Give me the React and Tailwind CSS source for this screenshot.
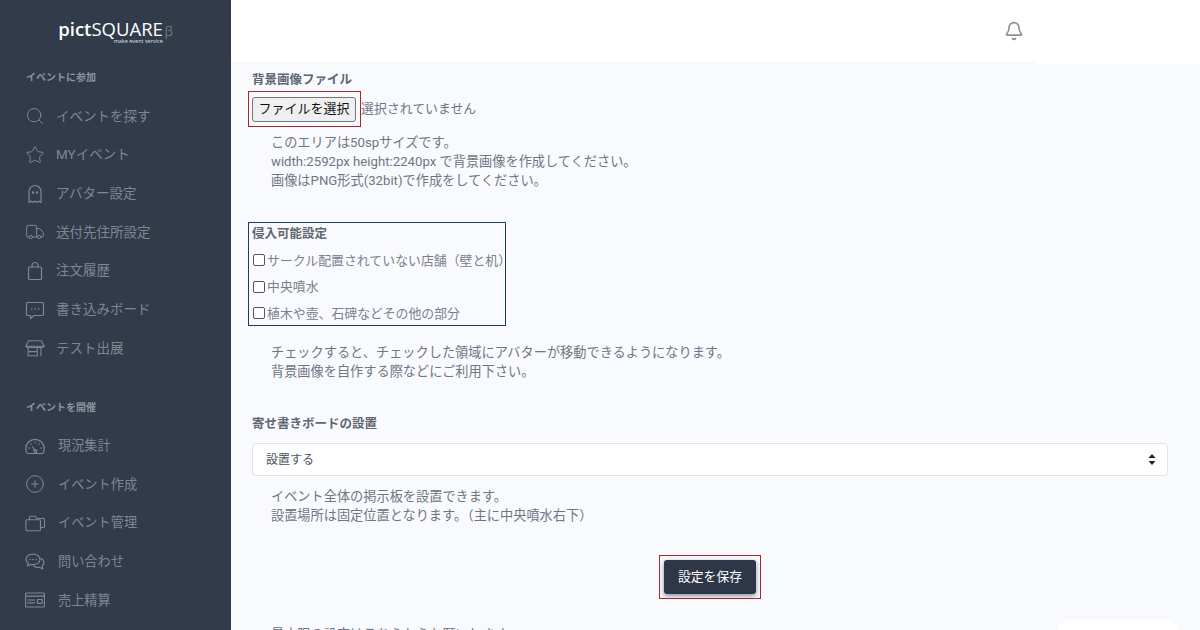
import React from 'react';
import { Search, Star, Truck, CirclePlus, Bell } from 'lucide-react';

const S = { fill: 'none', stroke: 'currentColor', strokeWidth: 1.2, strokeLinecap: 'round', strokeLinejoin: 'round' };

const Ghost = () => (
  <svg viewBox="0 0 18 20" width="18" height="20" {...S}>
    <path d="M3 18.5V7.5a6 6 0 0 1 12 0v11l-2-1.5-2 1.5-2-1.5-2 1.5-2-1.5z" />
    <circle cx="7" cy="8.5" r=".7" fill="currentColor" />
    <circle cx="11" cy="8.5" r=".7" fill="currentColor" />
  </svg>
);
const Bag = () => (
  <svg viewBox="0 0 18 20" width="18" height="20" {...S}>
    <rect x="2.5" y="6" width="13" height="12.5" rx="1" />
    <path d="M6 6V4.5a3 3 0 0 1 6 0V6" />
  </svg>
);
const Bubble = () => (
  <svg viewBox="0 0 20 20" width="20" height="20" {...S}>
    <path d="M2.5 2.5h15a1 1 0 0 1 1 1v11a1 1 0 0 1-1 1H9L5.5 18.500v-3h-3a1 1 0 0 1-1-1v-11a1 1 0 0 1 1-1z" />
    <path d="M6.500 9h.3M10 9h.3M13.500 9h.3" strokeWidth="1.4" />
  </svg>
);
const Shop = () => (
  <svg viewBox="0 0 22 20" width="22" height="20" {...S}>
    <path d="M1 8 4 2h14l3 6z" />
    <path d="M1 8a3 3 0 0 0 3 1.500h14A3 3 0 0 0 21 8" />
    <path d="M3.500 9.500V18.500h10V9.500M3.500 14h10M17.500 9.500v9" />
  </svg>
);
const Dash = () => (
  <svg viewBox="0 0 20 18" width="20" height="18" {...S}>
    <path d="M3 16.500a1.600 1.600 0 0 1-1.300-.8A8.800 8.800 0 0 1 .8 11.500a9.200 9.200 0 0 1 18.400 0c0 1.500-.3 3-.9 4.200a1.600 1.600 0 0 1-1.300.8z" />
    <path d="M7.500 10l2.500 3.500" />
    <circle cx="10.500" cy="14" r="1.400" />
    <path d="M4 11h.2M6 7h.2M10 5.200h.2M14 7h.2M16 11h.2" strokeWidth="1.4" />
  </svg>
);
const Fold = () => (
  <svg viewBox="0 0 22 20" width="22" height="20" {...S}>
    <path d="M5 6V3.500a1 1 0 0 1 1-1h5l2 2.500h7.500a1 1 0 0 1 1 1v8a1 1 0 0 1-1 1H17" />
    <path d="M1 7.500a1 1 0 0 1 1-1h14a1 1 0 0 1 1 1v10a1 1 0 0 1-1 1H2a1 1 0 0 1-1-1z" />
  </svg>
);
const Chat = () => (
  <svg viewBox="0 0 20 18" width="20" height="18" {...S}>
    <path d="M8 1.200c4 0 7 2.200 7 5.200s-3 5.200-7 5.200c-.8 0-1.600-.1-2.300-.3L2.600 13l.7-2.900C1.800 9.100 1 7.800 1 6.400c0-3 3-5.200 7-5.200z" />
    <path d="M16 5.500c1.800.9 3 2.300 3 4 0 1.300-.7 2.500-1.800 3.300l.6 3.200-3.300-1.700c-2.200.4-4.300-.1-5.700-1.300" />
    <path d="M5 6.500h.2M8 6.500h.2M11 6.500h.2" strokeWidth="1.4" />
  </svg>
);
const Bill = () => (
  <svg viewBox="0 0 21 16" width="21" height="16" {...S}>
    <rect x="0.6" y="0.6" width="19.800" height="14.800" rx="1" />
    <path d="M.6 4h19.800M3 8h7M3 11h7M13 7.500h5v4h-5z" />
  </svg>
);

const group1 = [
  [Search, 'イベントを探す'],
  [Star, 'MYイベント'],
  [Ghost, 'アバター設定'],
  [Truck, '送付先住所設定'],
  [Bag, '注文履歴'],
  [Bubble, '書き込みボード'],
  [Shop, 'テスト出展'],
];
const group2 = [
  [Dash, '現況集計'],
  [CirclePlus, 'イベント作成'],
  [Fold, 'イベント管理'],
  [Chat, '問い合わせ'],
  [Bill, '売上精算'],
];

function NavRow({ icon: Icon, label, gap, size }) {
  return (
    <div className="flex h-[38.7px] items-center pl-[25px] text-[#7d8796]">
      <span className="flex w-[20px] justify-center">
        <Icon size={20} strokeWidth={1.2} />
      </span>
      <span className={`${gap} ${size} leading-none`}>{label}</span>
    </div>
  );
}

function Sidebar() {
  return (
    <aside className="flex h-full w-[231px] shrink-0 flex-col bg-[#323b49]">
      <div className="flex h-[61px] items-start justify-center pt-[22px]">
        <div className="relative font-['Open_Sans',sans-serif] text-[18.5px] leading-[13px] text-white">
          <span className="font-semibold">pict</span>
          <span className="font-medium">SQUARE</span>
          <span className="ml-[2px] text-[13px] font-light text-[#8d96a3]">β</span>
          <span className="absolute right-[10px] top-[17px] whitespace-nowrap text-[5.5px] leading-none tracking-normal text-[#dfe3e8]">make event service</span>
        </div>
      </div>
      <div className="pl-[26px] pt-[11px] text-[10px] font-bold leading-[12px] text-[#8a94a2]">イベントに参加</div>
      <div className="pt-[13px]">
        {group1.map(([i, l]) => <NavRow key={l} icon={i} label={l} gap="ml-[11px]" size="text-[13.5px]" />)}
      </div>
      <div className="pl-[26px] pt-[34px] text-[10px] font-bold leading-[12px] text-[#8a94a2]">イベントを開催</div>
      <div className="pt-[12.5px]">
        {group2.map(([i, l]) => <NavRow key={l} icon={i} label={l} gap="ml-[13px]" size="text-[13.2px]" />)}
      </div>
    </aside>
  );
}

function Header() {
  return (
    <header className="relative flex h-[61px] shrink-0 items-center justify-end bg-white pr-[176px]">
      <Bell size={20} strokeWidth={2} className="text-[#8b9196]" />
      <div className="absolute right-0 top-0 h-[64px] w-[163px] bg-white" />
    </header>
  );
}

function Help({ lines, className = '' }) {
  return (
    <div className={`pl-[23px] text-[13.2px] leading-[19px] text-[#6f7682] ${className}`}>
      {lines.map((l) => <p key={l}>{l}</p>)}
    </div>
  );
}

function Check({ label }) {
  return (
    <label className="flex h-[26.5px] items-center gap-[2px] whitespace-nowrap pl-[4px] text-[12.9px] text-[#7a818c]">
      <input type="checkbox" className="h-[12px] w-[12px] shrink-0 appearance-none rounded-[2px] border border-[#555] bg-white" />
      <span>{label}</span>
    </label>
  );
}

export default function App() {
  return (
    <div className="relative flex h-[630px] w-[1200px] overflow-hidden font-['Roboto','Noto_Sans_CJK_JP',sans-serif]">
      <Sidebar />
      <div className="flex h-full min-w-0 flex-1 flex-col">
        <Header />
        <main className="min-h-0 flex-1 overflow-hidden bg-[#f9fafe] pl-[17px] pr-[32px]">
          <div className="pl-[4px] pt-[11px] text-[12.5px] font-bold leading-[16px] text-[#5f6671]">背景画像ファイル</div>
          <div className="flex items-center pt-[3px]">
            <div className="flex h-[36px] w-[113px] items-center border border-[#a8282c] pl-[3px]">
              <button className="flex h-[25px] w-[104px] items-center justify-center rounded-[3px] border border-[#767676] bg-[#efefef] text-[13px] text-[#111]">ファイルを選択</button>
            </div>
            <span className="text-[12.9px] text-[#6f7682]">選択されていません</span>
          </div>
          <Help className="pt-[6px]" lines={['このエリアは50spサイズです。', 'width:2592px height:2240px で背景画像を作成してください。', '画像はPNG形式(32bit)で作成をしてください。']} />
          <div className="mt-[32px] h-[104px] w-[258px] border border-[#1c3d63]">
            <div className="pl-[3px] pt-[3px] text-[12.5px] font-bold leading-[16px] text-[#5f6671]">侵入可能設定</div>
            <div className="pt-[5px]">
              <Check label="サークル配置されていない店舗（壁と机）" />
              <Check label="中央噴水" />
              <Check label="植木や壺、石碑などその他の部分" />
            </div>
          </div>
          <Help className="pt-[17px]" lines={['チェックすると、チェックした領域にアバターが移動できるようになります。', '背景画像を自作する際などにご利用下さい。']} />
          <div className="pl-[4px] pt-[35px] text-[12.5px] font-bold leading-[16px] text-[#5f6671]">寄せ書きボードの設置</div>
          <div className="ml-[4px] mt-[11px] flex h-[33px] items-center justify-between rounded-[4px] border border-[#e2e5ea] bg-white pl-[13px] pr-[11px] text-[12px] text-[#4b5563]">
            <span>設置する</span>
            <svg viewBox="0 0 8 11" width="8" height="11" fill="#222">
              <path d="M4 0 7.500 4H.5zM4 11 .5 7h7z" />
            </svg>
          </div>
          <Help className="pt-[11px]" lines={['イベント全体の掲示板を設置できます。', '設置場所は固定位置となります。（主に中央噴水右下）']} />
          <div className="flex justify-center pl-[4px] pt-[30px]">
            <div className="flex h-[44px] w-[102px] items-center justify-center border border-[#a8282c]">
              <button className="h-[34px] w-[92px] rounded-[3px] bg-[#2d3748] text-[12.8px] text-white shadow-[0_2px_5px_rgba(45,55,72,0.55)]">設定を保存</button>
            </div>
          </div>
          <div className="pl-[23px] pt-[26px] text-[13.2px] leading-[19px] text-[#6f7682]">最小限の設定はこちらからお願いします。</div>
        </main>
      </div>
      <div className="absolute bottom-[-14px] right-[22px] h-[24px] w-[120px] rounded-full bg-white" />
    </div>
  );
}
